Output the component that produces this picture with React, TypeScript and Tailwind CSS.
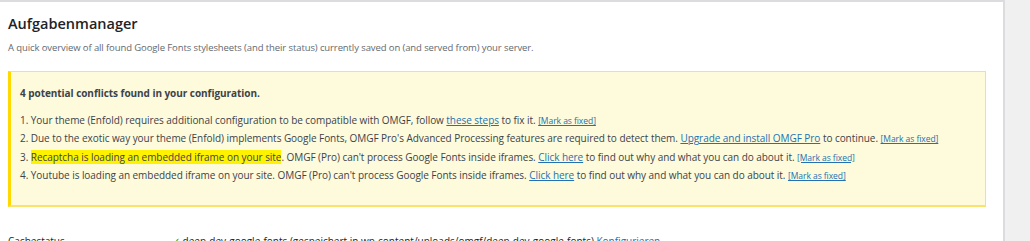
import React from "react";

const FONT = { fontFamily: '"Open Sans", "Segoe UI", sans-serif' };

function MarkFixed() {
  return <a className="text-[8.5px] leading-none text-[#2271b1] underline">[Mark as fixed]</a>;
}

function Link({ children }: { children: React.ReactNode }) {
  return <a className="text-[#2271b1] underline">{children}</a>;
}

export default function App() {
  return (
    <div className="flex h-[241px] w-[1030px] overflow-hidden bg-[#f0f0f1]" style={FONT}>
      <div className="w-[1005px] shrink-0 border-t-2 border-r-2 border-[#dcdcde] bg-white pl-2 pt-[11px]">
        <h2 className="text-[14.5px] font-semibold leading-[22px] text-[#1d2327]">Aufgabenmanager</h2>
        <p className="mt-[6px] text-[9.5px] leading-[14px] tracking-[-0.1px] text-[#646970]">
          A quick overview of all found Google Fonts stylesheets (and their status) currently saved on (and served from) your server.
        </p>
        <div className="mt-[16px] w-[978px] border border-b-2 border-l-[3px] border-[#fbe36b] border-l-[#ffd800] bg-[#fefadc] pb-[22px] pl-[9px] pt-[13px] text-[10px] tracking-[-0.05px] text-[#3c434a]">
          <p className="font-bold leading-[16px]">4 potential conflicts found in your configuration.</p>
          <ol className="mt-[11px] flex flex-col gap-[2.3px] leading-[16px]">
            <li>
              1. Your theme (Enfold) requires additional configuration to be compatible with OMGF, follow <Link>these steps</Link> to fix it. <MarkFixed />
            </li>
            <li>
              2. Due to the exotic way your theme (Enfold) implements Google Fonts, OMGF Pro's Advanced Processing features are required to detect them.{" "}
              <Link>Upgrade and install OMGF Pro</Link> to continue. <MarkFixed />
            </li>
            <li>
              3. <span className="bg-[#fff200]">Recaptcha is loading an embedded iframe on your site</span>. OMGF (Pro) can't process Google Fonts inside iframes.{" "}
              <Link>Click here</Link> to find out why and what you can do about it. <MarkFixed />
            </li>
            <li>
              4. Youtube is loading an embedded iframe on your site. OMGF (Pro) can't process Google Fonts inside iframes. <Link>Click here</Link> to find out why
              and what you can do about it. <MarkFixed />
            </li>
          </ol>
        </div>
        <div className="mt-[27px] flex text-[10px] leading-[14px] text-[#1d2327]">
          <div className="w-[164px]">Cachestatus</div>
          <div>
            <span className="text-[#00a32a]">✓</span> deep-dev-google-fonts (gespeichert in wp-content/uploads/omgf/deep-dev-google-fonts){" "}
            <Link>Konfigurieren</Link>
          </div>
        </div>
      </div>
    </div>
  );
}
